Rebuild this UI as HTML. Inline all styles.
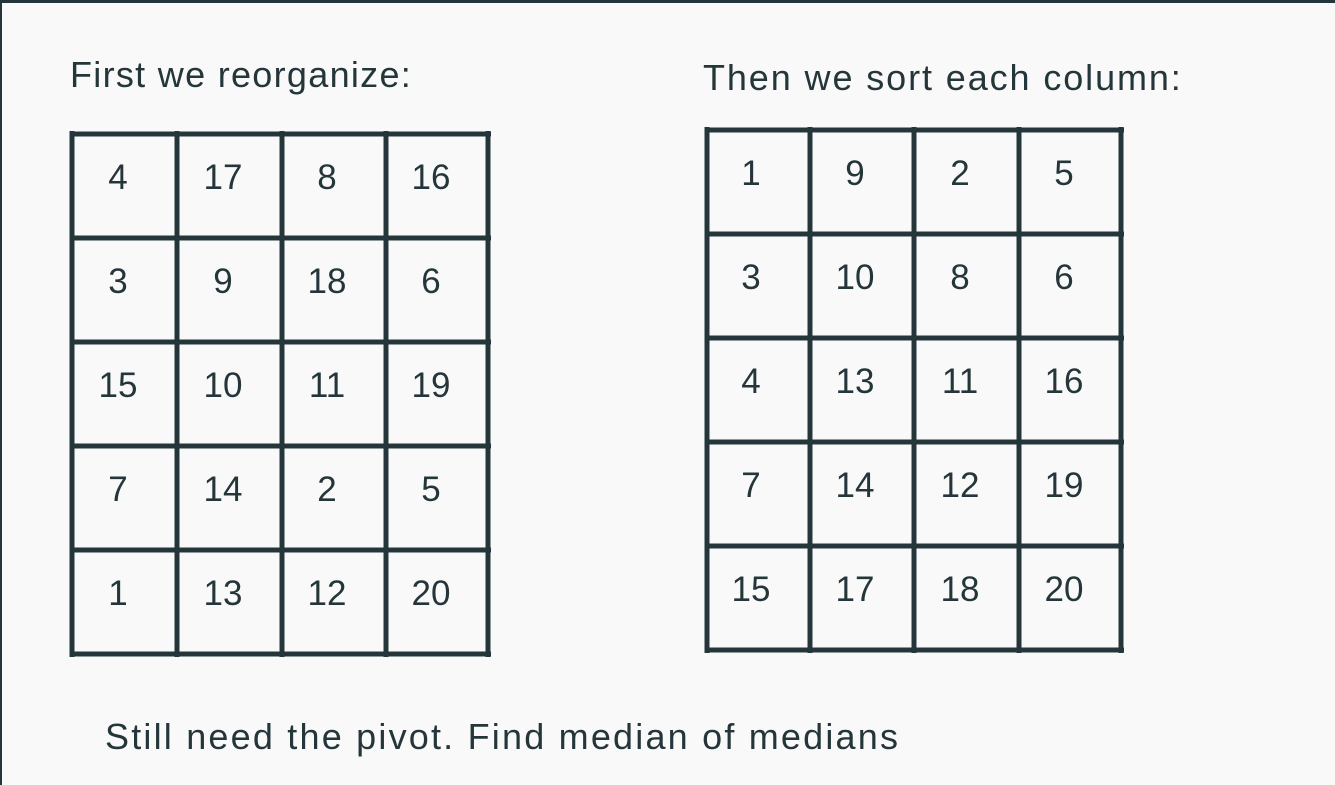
<!DOCTYPE html>
<html><head><style>
html,body{margin:0;padding:0}
body{width:1335px;height:785px;background:#f9f9f9;position:relative;overflow:hidden;font-family:"Liberation Sans",sans-serif;color:#25363b}
.top{position:absolute;left:0;top:0;width:1335px;height:3px;background:#25363b}
.left{position:absolute;left:0;top:0;width:2px;height:785px;background:#25363b}
.t{position:absolute;font-size:36px;white-space:nowrap}
svg{position:absolute;left:0;top:0}
svg text{font-family:"Liberation Sans",sans-serif;font-size:35px;fill:#25363b;text-anchor:middle}
</style></head><body>
<div class="top"></div><div class="left"></div>
<div class="t" style="left:70px;top:54px;letter-spacing:1.3px">First we reorganize:</div>
<div class="t" style="left:703px;top:57px;letter-spacing:1.9px">Then we sort each column:</div>
<div class="t" style="left:105px;top:716px;letter-spacing:2.2px">Still need the pivot. Find median of medians</div>
<svg width="1335" height="785">
<g stroke="#25363b" stroke-width="5" fill="none">
<line x1="72" y1="131" x2="72" y2="657"/><line x1="177" y1="131" x2="177" y2="657"/><line x1="282" y1="131" x2="282" y2="657"/><line x1="386" y1="131" x2="386" y2="657"/><line x1="488" y1="131" x2="488" y2="657"/>
<line x1="70" y1="134" x2="491" y2="134"/><line x1="70" y1="238" x2="491" y2="238"/><line x1="70" y1="342" x2="491" y2="342"/><line x1="70" y1="446" x2="491" y2="446"/><line x1="70" y1="550" x2="491" y2="550"/><line x1="70" y1="654" x2="491" y2="654"/>
<line x1="707" y1="127" x2="707" y2="653"/><line x1="810" y1="127" x2="810" y2="653"/><line x1="914" y1="127" x2="914" y2="653"/><line x1="1019" y1="127" x2="1019" y2="653"/><line x1="1121" y1="127" x2="1121" y2="653"/>
<line x1="705" y1="130" x2="1124" y2="130"/><line x1="705" y1="234" x2="1124" y2="234"/><line x1="705" y1="338" x2="1124" y2="338"/><line x1="705" y1="442" x2="1124" y2="442"/><line x1="705" y1="546" x2="1124" y2="546"/><line x1="705" y1="650" x2="1124" y2="650"/>
</g>
<g>
<text x="118" y="189">4</text><text x="223" y="189">17</text><text x="327" y="189">8</text><text x="431" y="189">16</text>
<text x="118" y="293">3</text><text x="223" y="293">9</text><text x="327" y="293">18</text><text x="431" y="293">6</text>
<text x="118" y="397">15</text><text x="223" y="397">10</text><text x="327" y="397">11</text><text x="431" y="397">19</text>
<text x="118" y="501">7</text><text x="223" y="501">14</text><text x="327" y="501">2</text><text x="431" y="501">5</text>
<text x="118" y="605">1</text><text x="223" y="605">13</text><text x="327" y="605">12</text><text x="431" y="605">20</text>
<text x="751" y="185">1</text><text x="855" y="185">9</text><text x="960" y="185">2</text><text x="1064" y="185">5</text>
<text x="751" y="289">3</text><text x="855" y="289">10</text><text x="960" y="289">8</text><text x="1064" y="289">6</text>
<text x="751" y="393">4</text><text x="855" y="393">13</text><text x="960" y="393">11</text><text x="1064" y="393">16</text>
<text x="751" y="497">7</text><text x="855" y="497">14</text><text x="960" y="497">12</text><text x="1064" y="497">19</text>
<text x="751" y="601">15</text><text x="855" y="601">17</text><text x="960" y="601">18</text><text x="1064" y="601">20</text>
</g>
</svg>
</body></html>
